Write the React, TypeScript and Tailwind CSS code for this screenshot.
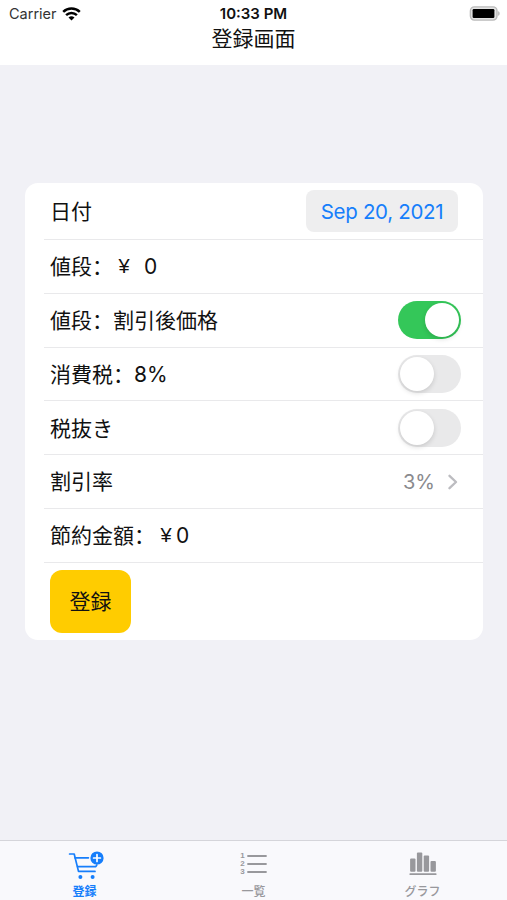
import { useState } from 'react';
import type { ReactNode } from 'react';

type TabKey = 'register' | 'list' | 'graph';

function WifiIcon() {
  return (
    <svg width="19" height="14" viewBox="0 0 19 14" fill="none" stroke="#000" strokeWidth="2.5">
      <path d="M1.2 4.9a11.9 11.9 0 0 1 16.6 0" />
      <path d="M4.1 8.2a7.8 7.8 0 0 1 10.8 0" />
      <path d="M9.5 13.6 6.5 10.6a4.4 4.4 0 0 1 6 0z" fill="#000" stroke="none" />
    </svg>
  );
}

function BatteryIcon() {
  return (
    <svg width="32" height="15" viewBox="0 0 32 15">
      <rect x="1.4" y="0.9" width="26.6" height="13.2" rx="4" fill="#e4e4e4" stroke="#bababa" strokeWidth="1.4" />
      <rect x="3.6" y="3" width="21.8" height="9" rx="1.2" fill="#000" />
      <path d="M29.3 5.2c1.6.5 1.6 4.1 0 4.6z" fill="#a5a5a5" />
    </svg>
  );
}

function CartIcon() {
  return (
    <svg width="36" height="30" viewBox="0 0 36 30" fill="none" stroke="currentColor" strokeWidth="1.7" strokeLinecap="round" strokeLinejoin="round">
      <path d="M1.6 3h4.6l4.3 17.4H27" />
      <path d="M7 6.8h13.4M9.6 15.6h18.2l1-1.6" />
      <circle cx="12.4" cy="25.9" r="2" fill="currentColor" stroke="none" />
      <circle cx="24.6" cy="25.9" r="2" fill="currentColor" stroke="none" />
      <circle cx="29" cy="7" r="6.6" fill="currentColor" stroke="none" />
      <path d="M29 3.6v6.8M25.6 7h6.8" stroke="#fff" strokeWidth="1.7" />
    </svg>
  );
}

function ListIcon() {
  return (
    <div className="flex gap-[2px]">
      <div className="flex flex-col font-['Liberation_Sans',sans-serif] text-[8px] font-bold leading-[8px]">
        <span>1</span>
        <span>2</span>
        <span>3</span>
      </div>
      <svg width="20" height="24" viewBox="0 0 20 24" stroke="currentColor" strokeWidth="1.8" strokeLinecap="round">
        <path d="M1 4h18M1 12h18M1 20h18" />
      </svg>
    </div>
  );
}

function ChartIcon() {
  return (
    <svg width="28" height="24" viewBox="0 0 28 24" fill="currentColor">
      <rect x="1.1" y="6.5" width="5.4" height="13.2" rx="1" />
      <rect x="7.9" y="0.5" width="5.4" height="19.2" rx="1" />
      <rect x="14.7" y="3.5" width="5.4" height="16.2" rx="1" />
      <rect x="21.5" y="9" width="5.4" height="10.7" rx="1" />
      <rect x="0.5" y="21.2" width="27" height="1.9" rx="0.6" />
    </svg>
  );
}

function Toggle({ on, onChange }: { on: boolean; onChange: () => void }) {
  return (
    <button
      role="switch"
      aria-checked={on}
      onClick={onChange}
      className={`flex h-[38px] w-[63px] items-center rounded-full p-[2px] ${on ? 'justify-end bg-[#34c759]' : 'justify-start bg-[#e9e9ea]'}`}
    >
      <span className="h-[34px] w-[34px] rounded-full bg-white shadow-[0_2px_5px_rgba(0,0,0,0.14)]" />
    </button>
  );
}

function Row({ label, children }: { label: ReactNode; children?: ReactNode }) {
  return (
    <div className="flex h-[53.8px] items-center justify-between border-b border-[#e9e9eb] pr-[22px] pl-[6px]">
      <span className="flex pt-px">{label}</span>
      {children}
    </div>
  );
}

function Yen() {
  return <span className="w-[21px] pl-px text-center font-['Liberation_Sans',sans-serif] text-[20px]">¥</span>;
}

export default function App() {
  const [discounted, setDiscounted] = useState(true);
  const [reducedTax, setReducedTax] = useState(false);
  const [taxExcluded, setTaxExcluded] = useState(false);
  const [tab, setTab] = useState<TabKey>('register');

  const tabs: { key: TabKey; label: string; icon: ReactNode }[] = [
    { key: 'register', label: '登録', icon: <CartIcon /> },
    { key: 'list', label: '一覧', icon: <ListIcon /> },
    { key: 'graph', label: 'グラフ', icon: <ChartIcon /> },
  ];

  return (
    <div className="flex h-[900px] w-[507px] flex-col overflow-hidden bg-[#f1f1f6] font-[Inter,'Noto_Sans_CJK_SC',sans-serif] text-[21px] text-[#111]">
      <header className="h-[65px] bg-white">
        <div className="grid h-[27px] grid-cols-3 items-center pr-[6px] pl-[9px] text-[14.5px]">
          <div className="flex items-center gap-[5px] text-[#333]">
            <span>Carrier</span>
            <WifiIcon />
          </div>
          <span className="pt-px pr-[3px] text-center text-[15px] font-semibold">10:33 PM</span>
          <div className="flex justify-end">
            <BatteryIcon />
          </div>
        </div>
        <h1 className="text-center leading-[24px]">登録画面</h1>
      </header>

      <main className="flex-1 pt-[118px] pr-[24px] pl-[25px]">
        <div className="h-[457px] rounded-[13px] bg-white pl-[19px]">
          <div className="flex h-[57px] items-center justify-between border-b border-[#e9e9eb] pr-[25px] pl-[6px]">
            <span className="pt-[2px]">日付</span>
            <button className="h-[42px] w-[152px] rounded-[8px] bg-[#eeeeef] pt-[2px] text-[20.5px] tracking-[-0.3px] text-[#167efb]">Sep 20, 2021</button>
          </div>
          <Row
            label={
              <>
                <span>値段：</span>
                <Yen />
                <span className="pl-[10px]">0</span>
              </>
            }
          />
          <Row label="値段：割引後価格">
            <Toggle on={discounted} onChange={() => setDiscounted(!discounted)} />
          </Row>
          <Row label="消費税：8%">
            <Toggle on={reducedTax} onChange={() => setReducedTax(!reducedTax)} />
          </Row>
          <Row label="税抜き">
            <Toggle on={taxExcluded} onChange={() => setTaxExcluded(!taxExcluded)} />
          </Row>
          <Row label="割引率">
            <div className="flex items-center gap-[13px] pr-[3px] text-[#8a8a8e]">
              <span className="text-[20px]">3%</span>
              <svg width="10" height="16" viewBox="0 0 10 16" fill="none" stroke="#bcbcc0" strokeWidth="2.3" strokeLinecap="round" strokeLinejoin="round">
                <path d="M1.5 1.8 8 8l-6.5 6.2" />
              </svg>
            </div>
          </Row>
          <Row
            label={
              <>
                <span>節約金額：</span>
                <Yen />
                <span>0</span>
              </>
            }
          />
          <div className="pt-[7px] pl-[6px]">
            <button className="h-[63.5px] w-[81px] rounded-[12px] bg-[#ffcc00] pt-px">登録</button>
          </div>
        </div>
      </main>

      <nav className="grid h-[60px] grid-cols-3 border-t border-[#d5d5da] bg-[#f9f9fc]">
        {tabs.map(t => (
          <button
            key={t.key}
            onClick={() => setTab(t.key)}
            className={`flex flex-col items-center text-[12px] leading-[16px] ${tab === t.key ? 'font-bold text-[#167efb]' : 'font-medium text-[#98989c]'}`}
          >
            <span className={`flex h-[43px] items-center ${tab === t.key ? 'pt-[7px] pl-[3px]' : 'pt-[2px]'}`}>{t.icon}</span>
            {t.label}
          </button>
        ))}
      </nav>
    </div>
  );
}
